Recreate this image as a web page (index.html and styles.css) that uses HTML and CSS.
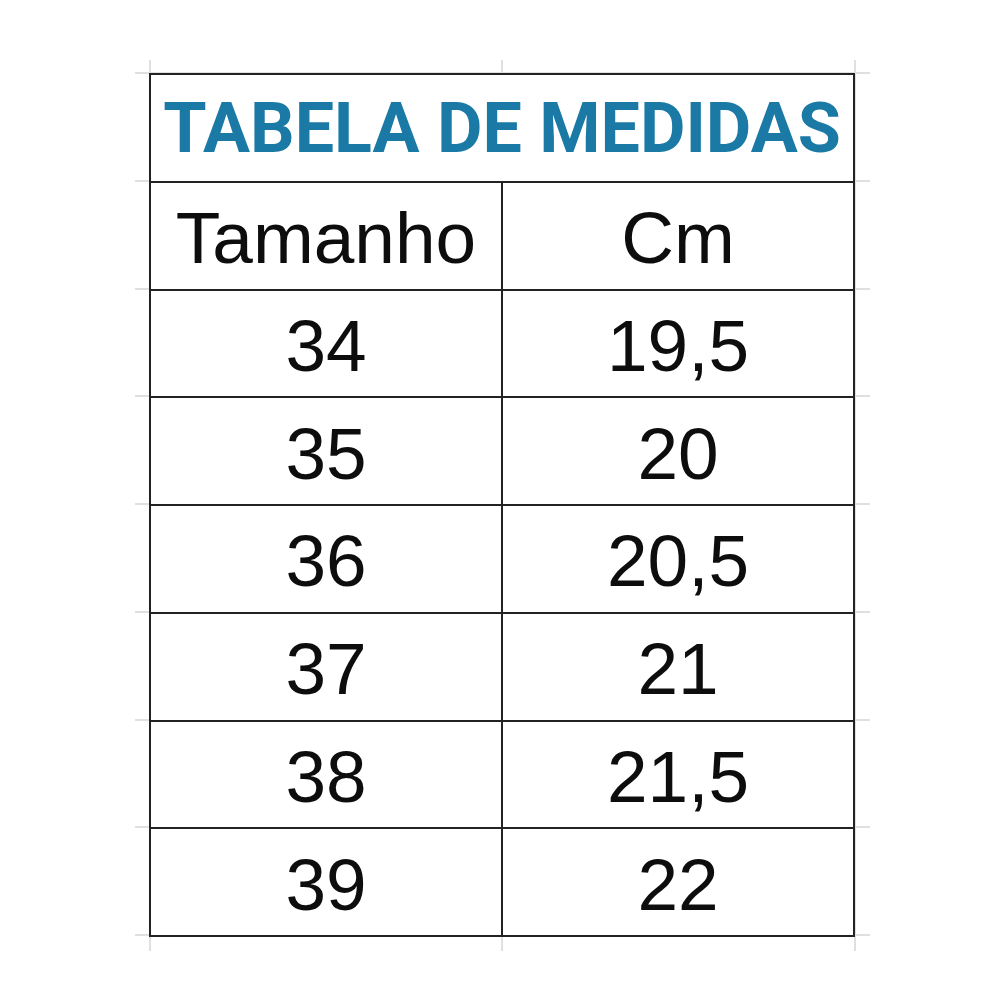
FILE: index.html
```html
<!DOCTYPE html>
<html lang="pt">
<head>
<meta charset="utf-8">
<title>Tabela de Medidas</title>
<link rel="stylesheet" href="styles.css">
</head>
<body>
<div class="sheet">
  <table class="sizes">
    <tr class="title-row"><th colspan="2" class="title">TABELA DE MEDIDAS</th></tr>
    <tr><td>Tamanho</td><td>Cm</td></tr>
    <tr><td>34</td><td>19,5</td></tr>
    <tr><td>35</td><td>20</td></tr>
    <tr><td>36</td><td>20,5</td></tr>
    <tr><td>37</td><td>21</td></tr>
    <tr><td>38</td><td>21,5</td></tr>
    <tr><td>39</td><td>22</td></tr>
  </table>
</div>
</body>
</html>
```
FILE: styles.css
```css
html, body {
  margin: 0;
  padding: 0;
  background: #ffffff;
}

.sheet {
  margin: 60px 0 0 135px;
  width: 735px;
  box-sizing: border-box;
  padding: 13px 14px 14px 14px;
  background-image:
    linear-gradient(to right, transparent 14px, #e0e0e0 14px, #e0e0e0 16px, transparent 16px),
    linear-gradient(to right, transparent 366px, #e0e0e0 366px, #e0e0e0 368px, transparent 368px),
    linear-gradient(to right, transparent 719px, #e0e0e0 719px, #e0e0e0 721px, transparent 721px),
    repeating-linear-gradient(to bottom, #e0e0e0 0 2px, transparent 2px 107.75px);
  background-position: 0 0, 0 0, 0 0, 0 12px;
  background-repeat: no-repeat, no-repeat, no-repeat, repeat;
}

.sizes {
  border-collapse: collapse;
  width: 706px;
  table-layout: fixed;
  background: #ffffff;
  font-family: "Liberation Sans", Arial, sans-serif;
  color: #0d0d0d;
}

.sizes th,
.sizes td {
  border: 2px solid #222222;
  height: 101.75px;
  padding: 4px 0 0 0;
  text-align: center;
  vertical-align: middle;
  font-size: 73px;
  font-weight: normal;
  line-height: 1;
}

.sizes td:first-child {
  width: 350px;
}

.sizes .title {
  height: 105.75px;
  padding: 0;
  font-family: "Roboto", "Liberation Sans", sans-serif;
  font-weight: 700;
  font-size: 70px;
  color: #1a7aa5;
  letter-spacing: 0;
  white-space: nowrap;
}
```
